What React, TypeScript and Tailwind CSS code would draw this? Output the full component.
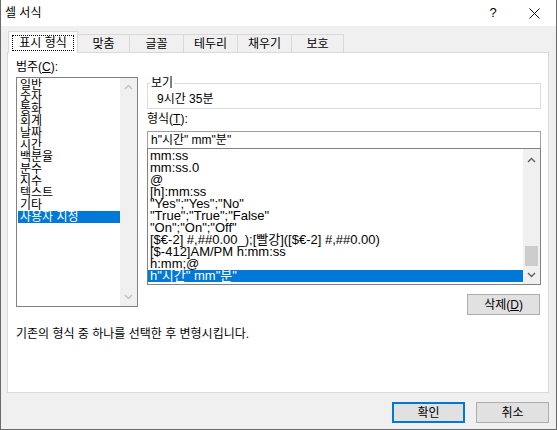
import React from 'react';

const categories = ['일반', '숫자', '통화', '회계', '날짜', '시간', '백분율', '분수', '지수', '텍스트', '기타', '사용자 지정'];

const formats = [
  'mm:ss',
  'mm:ss.0',
  '@',
  '[h]:mm:ss',
  '"Yes";"Yes";"No"',
  '"True";"True";"False"',
  '"On";"On";"Off"',
  '[$€-2] #,##0.00_);[빨강]([$€-2] #,##0.00)',
  '[$-412]AM/PM h:mm:ss',
  'h:mm;@',
  'h"시간" mm"분"',
];

const tabs = [
  { label: '맞춤', w: 'w-[52px]' },
  { label: '글꼴', w: 'w-[54px]' },
  { label: '테두리', w: 'w-[54px]' },
  { label: '채우기', w: 'w-[54px]' },
  { label: '보호', w: 'w-[52px]' },
];

const Chevron: React.FC<{ down?: boolean; color: string }> = ({ down, color }) => (
  <svg width="9" height="6" viewBox="0 0 9 6" className={down ? 'rotate-180' : ''}>
    <path d="M1 5 L4.5 1.5 L8 5" fill="none" stroke={color} strokeWidth="1.4" />
  </svg>
);

export default function App() {
  return (
    <div className="w-[557px] h-[430px] flex flex-col bg-[#f0f0f0] border-l border-r border-b border-[#6a6a6a] text-[12px] text-black font-['Liberation_Sans','Noto_Sans_CJK_KR',sans-serif] overflow-hidden">
      {/* Title bar */}
      <div className="h-[26px] bg-white flex items-center pl-[4px] shrink-0">
        <span className="flex-1 leading-none">셀 서식</span>
        <span className="w-[20px] text-center text-[13px] mr-[26px]">?</span>
        <svg width="11" height="11" viewBox="0 0 11 11" className="mr-[16px]">
          <path d="M0.5 0.5 L10.5 10.5 M10.5 0.5 L0.5 10.5" stroke="#111" strokeWidth="1" />
        </svg>
      </div>

      <div className="flex-1 flex flex-col pl-[6px]">
        {/* Tab strip */}
        <div className="h-[26px] flex items-end pl-[1px] shrink-0">
          <div className="relative z-10 -mb-px w-[70px] h-[22px] bg-white border border-b-0 border-[#d9d9d9] flex items-center justify-center">
            <span className="border border-dotted border-black px-[6px] leading-[14px]">표시 형식</span>
          </div>
          {tabs.map(t => (
            <div key={t.label} className={`${t.w} h-[18px] border border-b-0 border-l-0 border-[#d9d9d9] flex items-center justify-center leading-none`}>
              {t.label}
            </div>
          ))}
        </div>

        {/* Panel */}
        <div className="w-[542px] h-[341px] bg-white border border-[#d9d9d9] flex flex-col shrink-0">
          <div className="flex pl-[8px] gap-[9px]">
            {/* Category */}
            <div className="w-[122px] flex flex-col">
              <div className="mt-[6px] h-[18px] leading-[16px]">범주(<u>C</u>):</div>
              <div className="h-[230px] border border-[#828282] flex">
                <div className="flex-1 pt-[1px] pl-[1px]">
                  {categories.map((c, i) => (
                    <div
                      key={c}
                      className={`h-[12px] leading-[12px] pl-[2px] whitespace-nowrap ${i === categories.length - 1 ? 'bg-[#0078d7] text-white' : ''}`}
                    >
                      {c}
                    </div>
                  ))}
                </div>
                <div className="w-[17px] bg-[#f0f0f0] flex flex-col items-center justify-between py-[6px]">
                  <Chevron color="#c2c2c2" />
                  <Chevron down color="#c2c2c2" />
                </div>
              </div>
            </div>

            {/* Right column */}
            <div className="w-[394px] flex flex-col">
              <div className="relative mt-[30px] h-[26px] border border-[#dcdcdc] flex items-center pl-[9px]">
                <span className="absolute -top-[9px] left-[2px] bg-white px-[1px] leading-[16px]">보기</span>
                <span className="pt-[6px]">9시간 35분</span>
              </div>
              <div className="mt-[2px] h-[16px] leading-[16px]">형식(<u>T</u>):</div>
              <div className="mt-[4px] h-[17px] border border-[#a0a0a0] border-b-0 leading-[16px] pl-[3px]">h"시간" mm"분"</div>
              <div className="h-[137px] border border-[#828282] flex">
                <div className="flex-1 pt-[1px] text-[13px]">
                  {formats.map((f, i) => (
                    <div
                      key={f}
                      className={`h-[12px] leading-[12px] pl-[2px] whitespace-nowrap ${i === formats.length - 1 ? 'bg-[#0078d7] text-white' : ''}`}
                    >
                      {f}
                    </div>
                  ))}
                </div>
                <div className="w-[17px] bg-[#f0f0f0] flex flex-col items-center pt-[8px] pb-[6px]">
                  <Chevron color="#606060" />
                  <div className="flex-1" />
                  <div className="w-[13px] h-[20px] bg-[#cdcdcd] mb-[6px]" />
                  <Chevron down color="#606060" />
                </div>
              </div>
              <div className="mt-[9px] self-end mr-[1px] w-[73px] h-[21px] bg-[#e1e1e1] border border-[#adadad] flex items-center justify-center leading-none">
                삭제(<u>D</u>)
              </div>
            </div>
          </div>

          <div className="mt-[11px] pl-[8px] leading-[16px]">기존의 형식 중 하나를 선택한 후 변형시킵니다.</div>
        </div>

        {/* Buttons */}
        <div className="flex justify-end gap-[11px] mt-[9px] w-[542px]">
          <div className="w-[73px] h-[21px] bg-[#e1e1e1] border-2 border-[#0078d7] flex items-center justify-center leading-none">확인</div>
          <div className="w-[73px] h-[21px] bg-[#e1e1e1] border border-[#adadad] flex items-center justify-center leading-none">취소</div>
        </div>
      </div>
    </div>
  );
}
